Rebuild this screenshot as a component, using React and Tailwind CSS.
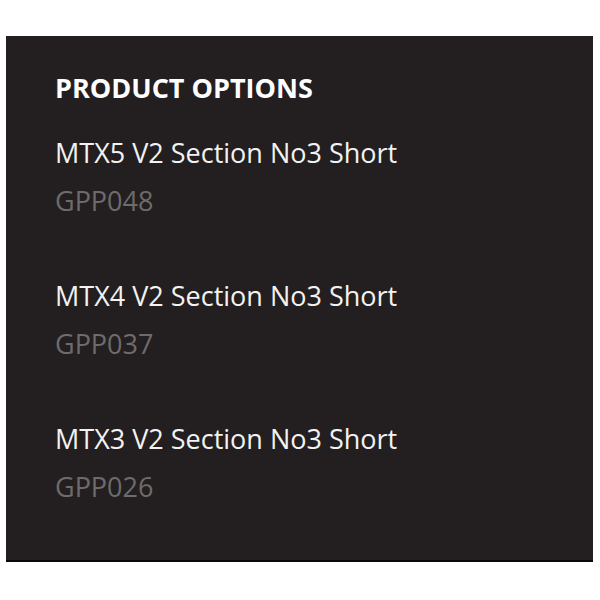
import React from "react";

const options = [
  { name: "MTX5 V2 Section No3 Short", code: "GPP048" },
  { name: "MTX4 V2 Section No3 Short", code: "GPP037" },
  { name: "MTX3 V2 Section No3 Short", code: "GPP026" },
];

export default function App() {
  return (
    <div className="w-[600px] h-[600px] bg-white pt-[36px] pl-[6px]" style={{ fontFamily: '"Open Sans", sans-serif' }}>
      <div className="w-[587px] h-[526px] bg-[#231f20] border-b-2 border-[#0b0a0a] pt-[35px] pl-[49px]">
        <h2 className="text-[27px] leading-[34px] font-bold text-white">PRODUCT OPTIONS</h2>
        <div className="flex flex-col gap-[61px] mt-[31px]">
          {options.map((o) => (
            <div key={o.code} className="flex flex-col gap-[14px]">
              <div className="text-[27px] leading-[34px] text-[#f2f2f2]">{o.name}</div>
              <div className="text-[27px] leading-[34px] text-[#6d6b6b]">{o.code}</div>
            </div>
          ))}
        </div>
      </div>
    </div>
  );
}
